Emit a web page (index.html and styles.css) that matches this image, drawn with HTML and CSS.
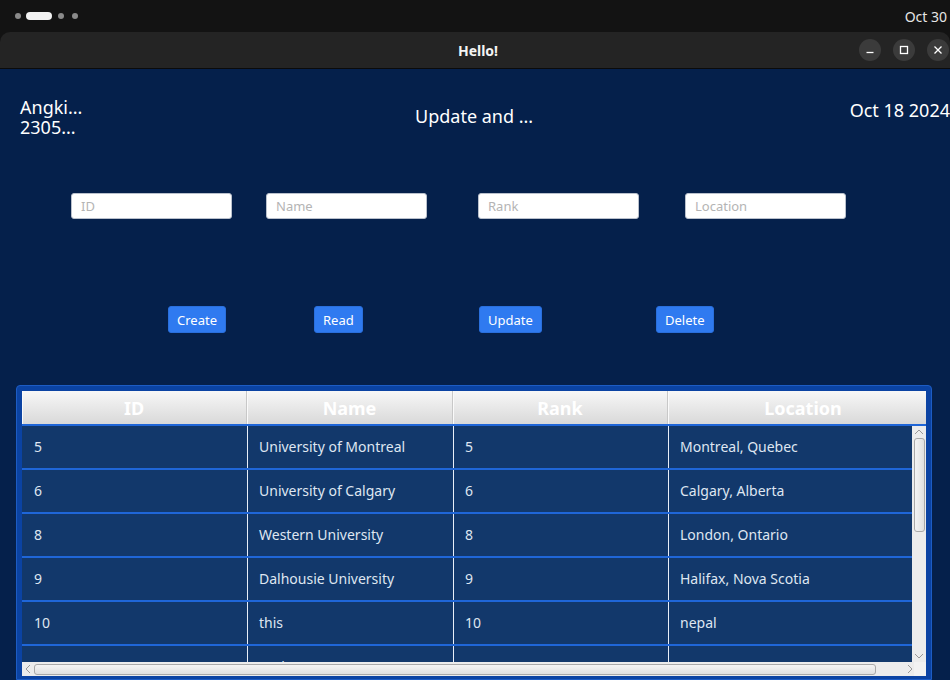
FILE: index.html
```html
<!DOCTYPE html>
<html>
<head>
<meta charset="utf-8">
<link rel="stylesheet" href="styles.css">
</head>
<body>
<div class="screen">
  <div class="topbar">
    <div class="ws">
      <span class="dot"></span><span class="pill"></span><span class="dot"></span><span class="dot"></span>
    </div>
    <div class="clock">Oct 30</div>
  </div>
  <div class="titlebar">
    <div class="title">Hello!</div>
    <div class="winbtns">
      <span class="wbtn"><svg width="10" height="10" viewBox="0 0 10 10"><path d="M1.5 7.5h7" stroke="#fff" stroke-width="1.3"/></svg></span>
      <span class="wbtn"><svg width="10" height="10" viewBox="0 0 10 10"><rect x="1.5" y="1.5" width="7" height="7" fill="none" stroke="#fff" stroke-width="1.3"/></svg></span>
      <span class="wbtn"><svg width="10" height="10" viewBox="0 0 10 10"><path d="M1.5 1.5l7 7M8.5 1.5l-7 7" stroke="#fff" stroke-width="1.3"/></svg></span>
    </div>
  </div>
  <div class="app">
    <div class="head">
      <div class="who"><div class="line">Angki...</div><div class="line">2305...</div></div>
      <div class="heading">Update and ...</div>
      <div class="date">Oct 18 2024</div>
    </div>
    <div class="fields">
      <input class="field" placeholder="ID">
      <input class="field" placeholder="Name">
      <input class="field" placeholder="Rank">
      <input class="field" placeholder="Location">
    </div>
    <div class="actions">
      <button class="btn">Create</button>
      <button class="btn">Read</button>
      <button class="btn">Update</button>
      <button class="btn">Delete</button>
    </div>
    <div class="panel">
      <div class="thead">
        <div class="th">ID</div>
        <div class="th">Name</div>
        <div class="th">Rank</div>
        <div class="th last">Location</div>
      </div>
      <div class="tbody-wrap">
        <div class="rows">
          <div class="row"><div class="td">5</div><div class="td">University of Montreal</div><div class="td">5</div><div class="td">Montreal, Quebec</div></div>
          <div class="row"><div class="td">6</div><div class="td">University of Calgary</div><div class="td">6</div><div class="td">Calgary, Alberta</div></div>
          <div class="row"><div class="td">8</div><div class="td">Western University</div><div class="td">8</div><div class="td">London, Ontario</div></div>
          <div class="row"><div class="td">9</div><div class="td">Dalhousie University</div><div class="td">9</div><div class="td">Halifax, Nova Scotia</div></div>
          <div class="row"><div class="td">10</div><div class="td">this</div><div class="td">10</div><div class="td">nepal</div></div>
          <div class="row"><div class="td">11</div><div class="td">Saskatoon</div><div class="td">202050</div><div class="td">Toronto</div></div>
        </div>
        <div class="vscroll">
          <svg class="arrow" width="10" height="8" viewBox="0 0 10 8"><path d="M1 6l4-4 4 4" fill="none" stroke="#999" stroke-width="1"/></svg>
          <div class="vthumb"></div>
          <div class="vspace"></div>
          <svg class="arrow" width="10" height="8" viewBox="0 0 10 8"><path d="M1 2l4 4 4-4" fill="none" stroke="#999" stroke-width="1"/></svg>
        </div>
      </div>
      <div class="hscroll">
        <svg class="arrow" width="8" height="10" viewBox="0 0 8 10"><path d="M6 1L2 5l4 4" fill="none" stroke="#999" stroke-width="1"/></svg>
        <div class="hthumb"></div>
        <svg class="arrow" width="8" height="10" viewBox="0 0 8 10"><path d="M2 1l4 4-4 4" fill="none" stroke="#999" stroke-width="1"/></svg>
        <div class="corner"></div>
      </div>
    </div>
  </div>
</div>
</body>
</html>
```

FILE: styles.css
```css
* { box-sizing: border-box; }
html, body { margin: 0; padding: 0; }
body {
  width: 950px;
  height: 680px;
  overflow: hidden;
  background: #131313;
  font-family: "Noto Sans", "DejaVu Sans", sans-serif;
}
.screen { display: flex; flex-direction: column; height: 680px; }

.topbar {
  height: 32px;
  background: #131313;
  display: flex;
  align-items: center;
  justify-content: space-between;
  padding: 0 3px 0 15px;
}
.ws { display: flex; align-items: center; gap: 5px; }
.dot { width: 6px; height: 6px; border-radius: 50%; background: #8a8a8a; }
.ws .dot:nth-child(3) { margin-left: 1px; }
.ws .dot:nth-child(4) { margin-left: 3px; }
.pill { width: 26px; height: 8px; border-radius: 4px; background: #f2f2f2; }
.clock { color: #e6e6e6; font-size: 14px; }

.titlebar {
  height: 37px;
  background: #242424;
  border-radius: 10px 10px 0 0;
  border-bottom: 1px solid #0b0b0b;
  display: flex;
  align-items: center;
  justify-content: center;
  position: relative;
}
.title { color: #f4f4f4; font-weight: bold; font-size: 14px; margin-left: 6px; }
.winbtns {
  position: absolute;
  right: 1px;
  top: 7px;
  display: flex;
  gap: 12px;
}
.wbtn {
  width: 22px; height: 22px; border-radius: 50%;
  background: #3b3b3b;
  display: flex; align-items: center; justify-content: center;
}

.app {
  flex: 1;
  background: #05204b;
  display: flex;
  flex-direction: column;
  overflow: hidden;
  color: #fff;
}
.head {
  display: grid;
  grid-template-columns: 395px auto 1fr;
  align-items: start;
  padding: 28px 0 0 20px;
  font-size: 18px;
  line-height: 20px;
}
.line { height: 20px; }
.heading { margin-top: 9px; }
.date { margin-top: 3px; justify-self: end; }

.fields {
  display: grid;
  grid-template-columns: 195px 212px 207px 161px;
  padding-left: 71px;
  margin-top: 56px;
}
.field {
  width: 161px;
  height: 26px;
  border: 1px solid #b9c0cc;
  border-radius: 3px;
  background: #fff;
  padding: 0 9px;
  font-family: "Noto Sans", sans-serif;
  font-size: 13px;
  color: #333;
}
.field::placeholder { color: #b4b4b4; }

.actions {
  display: grid;
  grid-template-columns: 146px 165px 177px auto;
  justify-items: start;
  padding-left: 168px;
  margin-top: 87px;
}
.btn {
  height: 27px;
  padding: 0 8px;
  border: 1px solid #2a6fdc;
  border-radius: 3px;
  background: #2f7af0;
  color: #fff;
  font-family: "Noto Sans", sans-serif;
  font-size: 13px;
}

.panel {
  margin: 52px 18px 0 16px;
  background: #0b43a3;
  border: 1px solid #1d5cc4;
  border-radius: 4px 4px 0 0;
  padding: 5px 5px 3px 5px;
  display: flex;
  flex-direction: column;
  flex: 1;
  overflow: hidden;
}
.thead {
  display: grid;
  grid-template-columns: 225px 206px 215px 1fr;
  height: 35px;
  flex: none;
  background: linear-gradient(#f7f7f7, #d9d9d9);
  border-bottom: 2px solid #1f66d8;
}
.th {
  display: flex; align-items: center; justify-content: center;
  color: #fff;
  font-weight: bold;
  font-size: 18px;
  border-right: 1px solid #c8c8c8;
  box-shadow: inset 1px 0 0 #fafafa;
}
.th.last { border-right: none; padding-left: 12px; }

.tbody-wrap {
  display: flex;
  flex: 1;
  min-height: 0;
  overflow: hidden;
}
.rows { flex: 1; background: #12386b; overflow: hidden; }
.row {
  display: grid;
  grid-template-columns: 225px 206px 215px 1fr;
  height: 44px;
  border-bottom: 2px solid #1f66d8;
}
.td {
  display: flex; align-items: center;
  padding-left: 11px;
  padding-bottom: 1px;
  color: #dfe6f1;
  font-size: 14px;
  border-left: 1px solid #e8eef8;
}
.td:first-child { border-left: none; padding-left: 12px; }

.vscroll {
  width: 14px;
  background: #ececec;
  display: flex;
  flex-direction: column;
  align-items: center;
  padding: 2px 0;
}
.arrow { flex: none; }
.vthumb {
  width: 11px;
  height: 94px;
  margin-top: 2px;
  border: 1px solid #a9a9a9;
  border-radius: 3px;
  background: linear-gradient(90deg, #f4f4f4, #e0e0e0);
}
.vspace { flex: 1; }

.hscroll {
  height: 14px;
  flex: none;
  background: #ececec;
  display: flex;
  align-items: center;
  padding-left: 2px;
}
.hthumb {
  width: 842px;
  height: 11px;
  margin-left: 2px;
  border: 1px solid #a9a9a9;
  border-radius: 3px;
  background: linear-gradient(#f4f4f4, #e0e0e0);
}
.hscroll .arrow:nth-of-type(2) { margin-left: 30px; }
.corner { flex: 1; height: 14px; background: #f2f2f2; }
```
